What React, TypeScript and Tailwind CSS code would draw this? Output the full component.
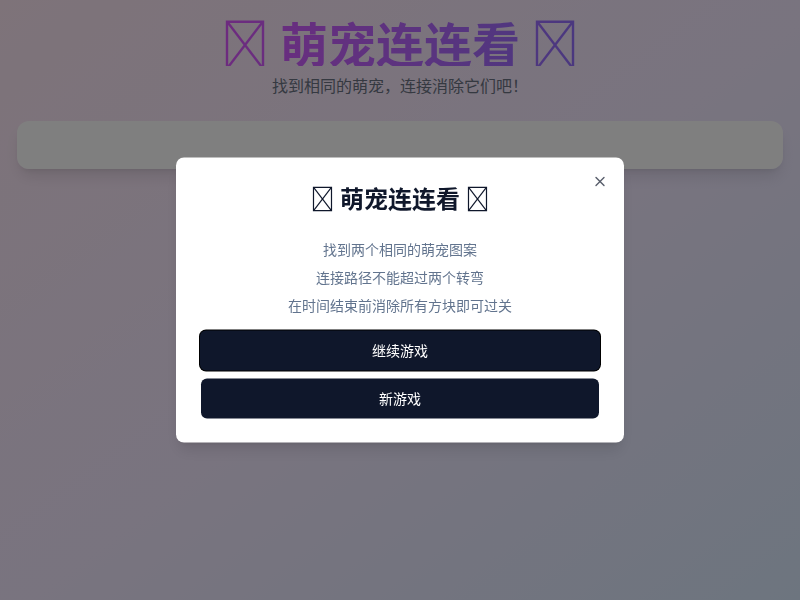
import React from "react";
import { X } from "lucide-react";

const FONT = { fontFamily: '"Noto Sans", "Noto Sans CJK SC", sans-serif' };
const TITLE_FONT = { fontFamily: '"Noto Sans CJK SC", "Noto Sans", sans-serif' };

export default function App() {
  return (
    <div className="relative min-h-screen w-full overflow-hidden bg-gradient-to-br from-pink-100 via-purple-100 to-blue-100" style={FONT}>
      <div className="flex flex-col items-center px-[17px] pt-[18px]">
        <h1
          className="text-5xl font-bold leading-[48px] bg-gradient-to-r from-[#dc56ff] to-[#9470ff] bg-clip-text text-transparent"
          style={TITLE_FONT}
        >
          {"\uE000"} 萌宠连连看 {"\uE000"}
        </h1>
        <p className="mt-2 text-base leading-6 text-gray-500">找到相同的萌宠，连接消除它们吧！</p>
        <div className="mt-[23px] h-12 w-full rounded-xl bg-white/95 shadow-lg"></div>
      </div>

      <div className="fixed inset-0 bg-black/50"></div>

      <div className="fixed left-1/2 top-1/2 w-[448px] -translate-x-1/2 -translate-y-1/2 rounded-lg bg-white p-6 shadow-lg">
        <button className="absolute right-4 top-4 text-slate-900 opacity-70">
          <X size={16} strokeWidth={2} />
        </button>
        <h2 className="text-center text-2xl font-bold leading-8 text-slate-900" style={TITLE_FONT}>
          {"\uE000"} 萌宠连连看 {"\uE000"}
        </h2>
        <div className="mt-[26px] flex flex-col gap-2 text-center text-sm leading-5 text-slate-500">
          <p>找到两个相同的萌宠图案</p>
          <p>连接路径不能超过两个转弯</p>
          <p>在时间结束前消除所有方块即可过关</p>
        </div>
        <div className="mt-[15px] flex flex-col gap-2">
          <button className="h-10 w-full rounded-md bg-slate-900 text-sm text-white ring-1 ring-black">继续游戏</button>
          <button className="mx-px h-10 rounded-md bg-slate-900 text-sm text-white">新游戏</button>
        </div>
      </div>
    </div>
  );
}
